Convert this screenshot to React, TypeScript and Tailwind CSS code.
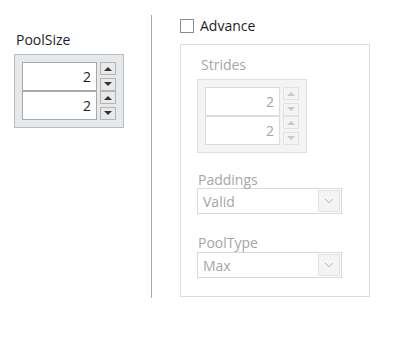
import React from 'react'

const font = { fontFamily: '"Open Sans", "Noto Sans", sans-serif' }

function SpinBtn({ up, disabled }: { up?: boolean; disabled?: boolean }) {
  return (
    <div
      className={
        'flex h-[13px] w-[16px] items-center justify-center border ' +
        (disabled ? 'border-[#e2e2e2] bg-[#f4f4f4]' : 'border-[#b4b4b4] bg-[#e9e9e9]')
      }
    >
      <svg width="8" height="5" viewBox="0 0 8 5">
        <path d={up ? 'M0 5 L4 1 L8 5 Z' : 'M0 0 L4 4 L8 0 Z'} fill={disabled ? '#c8c8c8' : '#333'} />
      </svg>
    </div>
  )
}

function Spinner({ disabled, val }: { disabled?: boolean; val: string[] }) {
  return (
    <div
      className={
        'w-[110px] border p-[7px] ' +
        (disabled ? 'border-[#e0e0e0] bg-[#f3f4f6]' : 'border-[#bcbcbc] bg-[#e6e9ec]')
      }
    >
      {val.map((v, i) => (
        <div key={i} className="flex gap-[3px]">
          <div
            className={
              'flex h-[29px] w-[75px] items-center justify-end border bg-white pr-[5px] text-[14px] ' +
              (disabled ? 'border-[#dcdcdc] text-[#a6a6a6]' : 'border-[#a9a9a9] text-[#1e1e1e]')
            }
          >
            {v}
          </div>
          <div className="flex flex-col justify-between">
            <SpinBtn up disabled={disabled} />
            <SpinBtn disabled={disabled} />
          </div>
        </div>
      ))}
    </div>
  )
}

function Combo({ text }: { text: string }) {
  return (
    <div className="flex h-[26px] w-[145px] items-center justify-between border border-[#d9d9d9] bg-white pl-[5px] pr-[1px] text-[14px] text-[#a6a6a6]">
      <span>{text}</span>
      <div className="flex h-[22px] w-[22px] items-center justify-center border border-[#e2e2e2] bg-[#f4f4f4]">
        <svg width="10" height="6" viewBox="0 0 10 6">
          <path d="M1 1 L5 5 L9 1" stroke="#b8b8b8" fill="none" strokeWidth="1" />
        </svg>
      </div>
    </div>
  )
}

export default function App() {
  return (
    <div className="flex h-[342px] w-[403px] bg-white" style={font}>
      <div className="w-[151px] pl-[14px] pt-[29px]">
        <div className="mb-[4px] pl-[2px] text-[14px] text-[#1e1e1e]">PoolSize</div>
        <Spinner val={['2', '2']} />
      </div>
      <div className="mt-[15px] h-[283px] w-px bg-[#a8a8a8]" />
      <div className="pl-[28px] pt-[19px]">
        <div className="flex items-center gap-[6px]">
          <div className="h-[14px] w-[14px] border border-[#8c8c8c] bg-white" />
          <span className="text-[14px] leading-[14px] text-[#1e1e1e]">Advance</span>
        </div>
        <div className="mt-[11px] h-[253px] w-[190px] border border-[#dcdcdc] pl-[16px] pt-[9px]">
          <div className="mb-[4px] pl-[4px] text-[14px] text-[#a6a6a6]">Strides</div>
          <Spinner disabled val={['2', '2']} />
          <div className="mt-[19px] pl-[1px] text-[14px] leading-[16px] text-[#a6a6a6]">Paddings</div>
          <Combo text="Valid" />
          <div className="mt-[21px] mb-[1px] pl-[1px] text-[14px] leading-[16px] text-[#a6a6a6]">PoolType</div>
          <Combo text="Max" />
        </div>
      </div>
    </div>
  )
}
